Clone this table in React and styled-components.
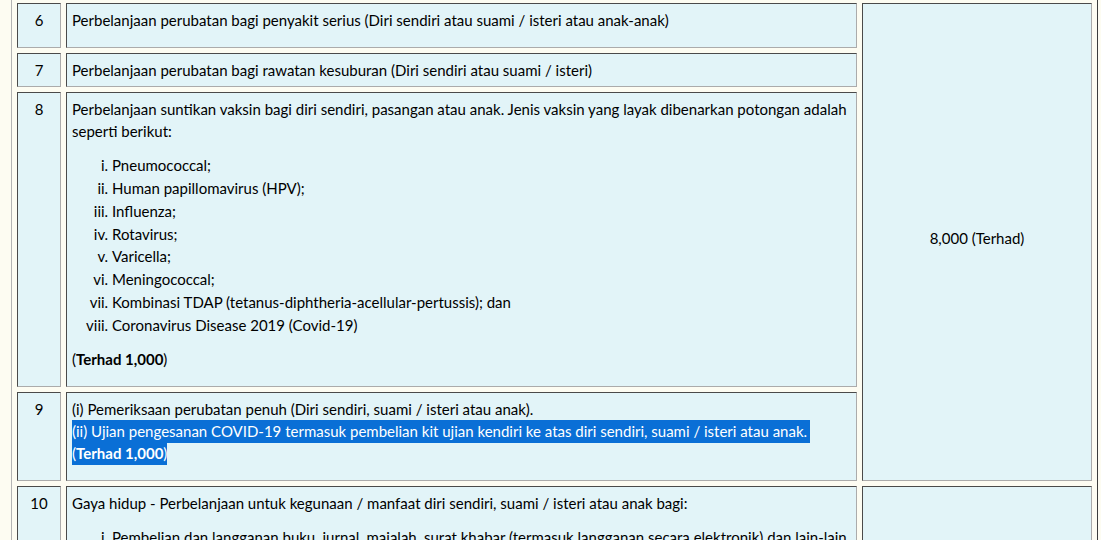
import React from "react";
import styled, { createGlobalStyle } from "styled-components";

const GlobalStyle = createGlobalStyle`
  html, body {
    margin: 0;
    padding: 0;
    background: #fdfcf2;
  }
  body {
    font-family: Lato, "Liberation Sans", sans-serif;
    font-size: 15px;
    color: #000;
    overflow: hidden;
  }
  ::selection {
    background: #0a6fd6;
    color: #fff;
  }
`;

const Page = styled.div`
  padding: 0 3px 0 11px;
  margin-top: -3px;
`;

const Table = styled.table`
  width: 100%;
  table-layout: fixed;
  border-collapse: separate;
  border-spacing: 5px;
  border: 1px solid;
  border-color: #b4b4b4 #3c3c3c #3c3c3c #b4b4b4;
  background: #fdfcf2;
`;

const Cell = styled.td`
  box-sizing: border-box;
  background: #e2f4f8;
  border: 1px solid;
  border-color: #4a4a4a #ababab #ababab #4a4a4a;
  padding: 5px;
  padding-bottom: ${(p) => (p.$middle ? "12px" : "5px")};
  line-height: 22px;
  vertical-align: ${(p) => (p.$middle ? "middle" : "top")};
  text-align: ${(p) => (p.$center ? "center" : "left")};
`;

const Para = styled.p`
  margin: 0 0 ${(p) => (p.$gap ? "11px" : "0")};
`;

const RomanList = styled.ol`
  list-style-type: lower-roman;
  margin: 12px 0 11px;
  padding-left: 40px;

  li {
    line-height: 22.86px;
  }
`;

const Selected = styled.span`
  background: #0a6fd6;
  color: #fff;
  padding: 2px 0 3px;
  padding-right: ${(p) => (p.$tail ? "3px" : "0")};
`;

const vaccines = [
  "Pneumococcal;",
  "Human papillomavirus (HPV);",
  "Influenza;",
  "Rotavirus;",
  "Varicella;",
  "Meningococcal;",
  "Kombinasi TDAP (tetanus-diphtheria-acellular-pertussis); dan",
  "Coronavirus Disease 2019 (Covid-19)",
];

const lifestyle = [
  "Pembelian dan langganan buku, jurnal, majalah, surat khabar (termasuk langganan secara elektronik) dan lain-lain bahan bacaan yang serupa (tidak termasuk bahan bacaan yang dilarang);",
  "Pembelian komputer peribadi, telefon pintar atau tablet (bukan untuk kegunaan perniagaan);",
  "Bayaran bil internet yang dilanggan atas nama sendiri; dan",
  "Bayaran yuran pengajian kursus peningkatan kemahiran atau pembangunan diri.",
];

export default function App() {
  return (
    <>
      <GlobalStyle />
      <Page>
        <Table>
          <colgroup>
            <col style={{ width: "44px" }} />
            <col style={{ width: "791px" }} />
            <col />
          </colgroup>
          <tbody>
            <tr>
              <Cell $center>6</Cell>
              <Cell>
                <Para $gap>
                  Perbelanjaan perubatan bagi penyakit serius (Diri sendiri atau
                  suami / isteri atau anak-anak)
                </Para>
              </Cell>
              <Cell rowSpan={4} $center $middle>
                8,000 (Terhad)
              </Cell>
            </tr>
            <tr>
              <Cell $center>7</Cell>
              <Cell>
                Perbelanjaan perubatan bagi rawatan kesuburan (Diri sendiri atau
                suami / isteri)
              </Cell>
            </tr>
            <tr>
              <Cell $center>8</Cell>
              <Cell>
                <Para>
                  Perbelanjaan suntikan vaksin bagi diri sendiri, pasangan atau
                  anak. Jenis vaksin yang layak dibenarkan potongan adalah
                  seperti berikut:
                </Para>
                <RomanList>
                  {vaccines.map((v) => (
                    <li key={v}>{v}</li>
                  ))}
                </RomanList>
                <Para $gap>
                  (<b>Terhad 1,000</b>)
                </Para>
              </Cell>
            </tr>
            <tr>
              <Cell $center>9</Cell>
              <Cell>
                <Para $gap>
                  (i) Pemeriksaan perubatan penuh (Diri sendiri, suami / isteri
                  atau anak).
                  <br />
                  <Selected $tail>
                    (ii) Ujian pengesanan COVID-19 termasuk pembelian kit ujian
                    kendiri ke atas diri sendiri, suami / isteri atau anak.
                  </Selected>
                  <br />
                  <Selected>
                    (<b>Terhad 1,000</b>)
                  </Selected>
                </Para>
              </Cell>
            </tr>
            <tr>
              <Cell $center>10</Cell>
              <Cell>
                <Para>
                  Gaya hidup - Perbelanjaan untuk kegunaan / manfaat diri
                  sendiri, suami / isteri atau anak bagi:
                </Para>
                <RomanList>
                  {lifestyle.map((v) => (
                    <li key={v}>{v}</li>
                  ))}
                </RomanList>
                <Para $gap>
                  (<b>Terhad 2,500</b>)
                </Para>
              </Cell>
              <Cell $center $middle>
                2,500 (Terhad)
              </Cell>
            </tr>
          </tbody>
        </Table>
      </Page>
    </>
  );
}
